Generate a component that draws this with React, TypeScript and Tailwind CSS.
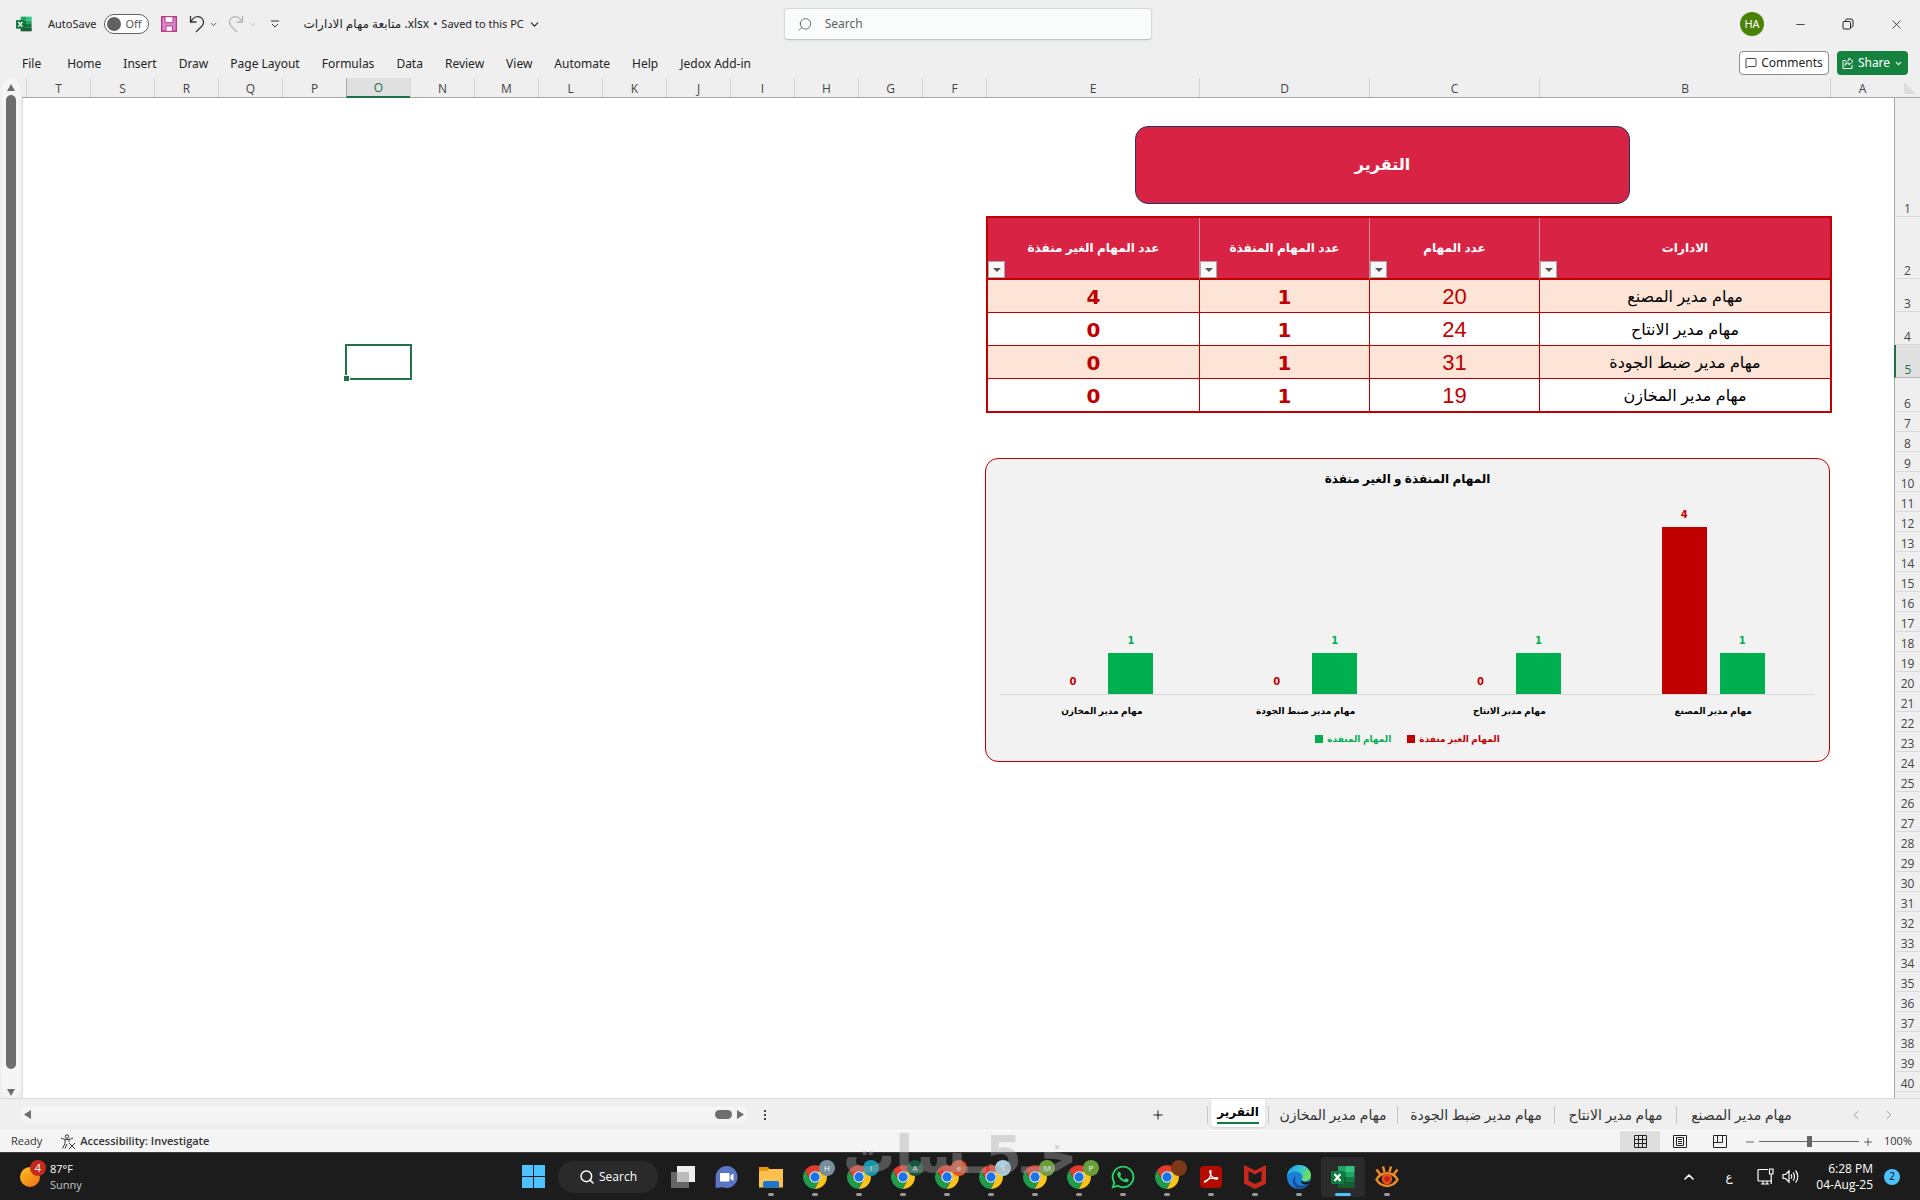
import { ReactNode, useState } from 'react';
import { ChevronDown, ChevronLeft, ChevronRight, ChevronUp, MessageSquare, Minus, Plus, Search, X } from 'lucide-react';
import { FaWhatsapp } from 'react-icons/fa';

const MENU = ['Home', 'Insert', 'Draw', 'Page Layout', 'Formulas', 'Data', 'Review', 'View', 'Automate', 'Help', 'Jedox Add-in'];

const COLUMNS = [
    { name: 'A', width: 'w-[64px]' },
    { name: 'B', width: 'w-[291px]' },
    { name: 'C', width: 'w-[170px]' },
    { name: 'D', width: 'w-[170px]' },
    { name: 'E', width: 'w-[213px]' },
    ...'FGHIJKLMNOPQRST'.split('').map((name) => ({ name, width: 'w-[64px]' })),
];

const ROW_HEIGHTS: Record<number, string> = {
    1: 'h-[119px]',
    2: 'h-[62px]',
    3: 'h-[33px]',
    4: 'h-[33px]',
    5: 'h-[33px]',
    6: 'h-[34px]',
};

const DEPARTMENTS = [
    { name: 'مهام مدير المصنع', total: 20, done: 1, open: 4 },
    { name: 'مهام مدير الانتاح', total: 24, done: 1, open: 0 },
    { name: 'مهام مدير ضبط الجودة', total: 31, done: 1, open: 0 },
    { name: 'مهام مدير المخازن', total: 19, done: 1, open: 0 },
];

const SHEET_TABS = [
    { name: 'مهام مدير المخازن', width: 'w-[129px]' },
    { name: 'مهام مدير ضبط الجودة', width: 'w-[157px]' },
    { name: 'مهام مدير الانتاح', width: 'w-[122px]' },
    { name: 'مهام مدير المصنع', width: 'w-[130px]' },
];

const ExcelIcon = ({ className }: { className: string }) => (
    <svg viewBox="0 0 24 24" className={className}>
        <path d="M7 1h8v6H7z" fill="#21a366" />
        <path d="M15 1h8.500v6H15z" fill="#33c481" />
        <path d="M7 7h8v5H7z" fill="#107c41" />
        <path d="M15 7h8.500v5H15z" fill="#21a366" />
        <path d="M7 12h8v5H7z" fill="#185c37" />
        <path d="M15 12h8.500v5H15z" fill="#107c41" />
        <path d="M7 17h16.500v6H7z" fill="#185c37" />
        <rect x="0" y="6" width="13" height="13" rx="1" fill="#107c41" />
        <path d="M3.500 9l6 7M9.500 9l-6 7" stroke="#fff" strokeWidth="2" />
    </svg>
);

const TitleBar = () => (
    <header className="flex h-12 items-center font-['Noto_Sans','DejaVu_Sans',sans-serif] text-[11px] text-[#242424]">
        <div className="flex flex-1 items-center pl-4">
            <ExcelIcon className="h-4 w-4" />
            <span className="ml-4">AutoSave</span>
            <button className="ml-2 flex h-5 w-[45px] items-center gap-1 rounded-full border border-[#616161] bg-white pl-0.5">
                <span className="h-3.5 w-3.5 rounded-full bg-[#616161]" />
                <span className="text-[#555]">Off</span>
            </button>
            <button aria-label="Save" className="ml-3">
                <svg viewBox="0 0 16 16" className="h-4 w-4">
                    <path d="M.7.700h14.600v14.600H.7z" fill="#d989d3" stroke="#b83a80" strokeWidth="1.400" />
                    <path d="M4 .7h8v6H4zM5 10h6.500v5.300H5z" fill="#fff" stroke="#b83a80" />
                </svg>
            </button>
            <button aria-label="Undo" className="ml-3 flex items-center gap-1">
                <svg viewBox="0 0 16 18" className="h-[18px] w-4" fill="none" stroke="#333" strokeWidth="1.300">
                    <path d="M1.500 1v6h6M1.500 7C4 2.500 8 .5 11.500 2.300c3.500 2 4 6 1.500 8.700L7 17" />
                </svg>
                <ChevronDown size={9} />
            </button>
            <button aria-label="Redo" className="ml-2.5 flex items-center gap-1 text-[#b5b5b5]">
                <svg viewBox="0 0 16 18" className="h-[18px] w-4" fill="none" stroke="currentColor" strokeWidth="1.300">
                    <path d="M14.500 1v6h-6M14.500 7C12 2.500 8 .5 4.500 2.300c-3.500 2-4 6-1.500 8.700L9 17" />
                </svg>
                <ChevronDown size={9} />
            </button>
            <button aria-label="Customize toolbar" className="ml-3.5">
                <svg viewBox="0 0 8 8" className="h-2 w-2" fill="none" stroke="#333">
                    <path d="M0 1h8M1 4l3 3 3-3" />
                </svg>
            </button>
            <button className="ml-6 flex items-center gap-1 whitespace-nowrap">
                <span className="text-[12px]">متابعة مهام الادارات .xlsx</span>
                <span>•</span>
                <span>Saved to this PC</span>
                <ChevronDown size={13} />
            </button>
        </div>
        <label className="flex h-8 w-[368px] items-center gap-3 rounded border border-[#d5d8d6] border-b-[#bfc4c1] bg-[#fafcfb] pl-3 text-[12px] shadow-xs">
            <Search size={17} strokeWidth={1.3} className="-scale-x-100 text-[#555]" />
            <input type="search" placeholder="Search" className="w-full bg-transparent outline-none placeholder:text-[#616161]" />
        </label>
        <div className="flex flex-1 items-center justify-end">
            <span className="mr-3 flex h-6 w-6 items-center justify-center rounded-full bg-[#498205] text-white">HA</span>
            <button aria-label="Minimize" className="flex w-12 justify-center"><Minus size={13} strokeWidth={1.5} /></button>
            <button aria-label="Restore" className="flex w-12 justify-center">
                <svg viewBox="0 0 12 12" className="h-3 w-3" fill="none" stroke="#222">
                    <rect x="1" y="3.500" width="7.500" height="7.500" rx="1" />
                    <path d="M3.500 3.500V2.500a1.500 1.500 0 0 1 1.500-1.500h4A2 2 0 0 1 11 3v4.500a1.500 1.500 0 0 1-1.500 1.500H8.500" />
                </svg>
            </button>
            <button aria-label="Close" className="flex w-12 justify-center"><X size={15} strokeWidth={1.3} /></button>
        </div>
    </header>
);

const MenuBar = () => (
    <nav className="flex h-[30px] items-center justify-between pl-[22px] pr-3 font-['Noto_Sans','DejaVu_Sans',sans-serif] text-[12px] text-[#242424]">
        <div className="flex gap-[22px] whitespace-nowrap pt-0.5">
            <button className="pr-1">File</button>
            {MENU.map((item) => <button key={item}>{item}</button>)}
        </div>
        <div className="flex gap-2">
            <button className="flex h-6 w-[90px] items-center justify-center gap-1 rounded border border-[#8a8a8a] bg-white">
                <MessageSquare size={12} strokeWidth={1.7} />
                Comments
            </button>
            <button className="flex h-6 w-[71px] items-center justify-center gap-1 rounded bg-[#15833f] text-white">
                <svg viewBox="0 0 12 12" className="h-3 w-3" fill="none" stroke="currentColor">
                    <path d="M4 3.500H1v8h9V8M7 1l4 3.500L7 8V6C5 6 4 7 3 8.500 3.500 5.500 5 3.500 7 3.200z" />
                </svg>
                Share
                <ChevronDown size={9} strokeWidth={3} />
            </button>
        </div>
    </nav>
);

const VerticalScroll = () => (
    <div className="flex w-[22px] flex-col px-0.5">
        <div className="flex flex-1 flex-col items-center rounded-full bg-[#f5f5f5] pb-0.5 pt-1.5">
            <svg viewBox="0 0 8 7" className="h-[7px] w-2" fill="#6e6e6e"><path d="M4 0l4 7H0z" /></svg>
            <div className="my-1 w-2.5 flex-1 rounded-full bg-[#6e6e6e]" />
            <svg viewBox="0 0 8 7" className="mt-4 h-[7px] w-2" fill="#6e6e6e"><path d="M0 0h8L4 7z" /></svg>
        </div>
    </div>
);

const ColumnHeaders = () => (
    <div className="flex h-5 border-b border-[#a6a6a6] text-[12px] text-[#444]">
        <div className="flex w-[26px] shrink-0 items-center pr-1">
            <svg viewBox="0 0 12 12" className="h-3 w-3" fill="#dcdcdc"><path d="M0 0v12h12z" /></svg>
        </div>
        {COLUMNS.map(({ name, width }) => (
            <div
                key={name}
                className={`${width} flex shrink-0 items-center justify-center border-l pt-0.5 leading-none ${
                    name === 'O'
                        ? '-mb-px border-b-2 border-l-[#a6a6a6] border-b-[#1e7145] bg-[#e0e0e0] text-[#1e7145]'
                        : 'border-[#d4d4d4]'
                }`}
            >
                {name}
            </div>
        ))}
    </div>
);

const RowHeaders = () => (
    <div className="flex w-[26px] shrink-0 flex-col text-[12px] text-[#444]">
        {Array.from({ length: 40 }, (_, i) => i + 1).map((row) => (
            <div
                key={row}
                className={`${ROW_HEIGHTS[row] ?? 'h-5'} flex items-end justify-center border-b leading-[14px] ${
                    row === 5
                        ? 'border-b-[#b5b5b5] border-l-2 border-l-[#1e7145] bg-[#e0e0e0] text-[#1e7145]'
                        : 'border-b-[#d9d9d9] border-l border-l-[#a6a6a6]'
                }`}
            >
                {row}
            </div>
        ))}
        <div className="flex-1 border-l border-[#a6a6a6]" />
    </div>
);

const HeaderCell = ({ width, label }: { width: string; label: string }) => (
    <th scope="col" className={`${width} relative border-b-2 border-l border-b-[#c00000] border-l-[#c9909a] bg-[#d92344] p-0 font-bold last:border-l-0`}>
        {label}
        <button aria-label={`تصفية ${label}`} className="absolute bottom-0 left-0 flex h-[17px] w-[17px] items-center justify-center border border-[#a9a9a9] bg-[#f7f7f7]">
            <svg viewBox="0 0 8 4" className="h-1 w-2" fill="#555"><path d="M0 0h8L4 4z" /></svg>
        </button>
    </th>
);

const ReportTable = () => (
    <table className="mt-3 w-[846px] table-fixed border-separate border-spacing-0 border-2 border-[#c00000] text-center font-['Liberation_Sans','DejaVu_Sans',sans-serif]">
        <thead>
            <tr className="h-[62px] text-[12px] text-white">
                <HeaderCell width="w-[291px]" label="الادارات" />
                <HeaderCell width="w-[170px]" label="عدد المهام" />
                <HeaderCell width="w-[170px]" label="عدد المهام المنفذة" />
                <HeaderCell width="w-[211px]" label="عدد المهام الغير منفذة" />
            </tr>
        </thead>
        <tbody className="[&_td]:border-b [&_td]:border-l [&_td]:border-[#c00000] [&_td]:p-0 [&_td]:pt-0.5 [&_td:last-child]:border-l-0 [&_tr:last-child_td]:border-b-0">
            {DEPARTMENTS.map((dept) => (
                <tr key={dept.name} className="h-[33px] text-[22px] leading-6 text-[#c00000] odd:bg-[#fce4d6] last:h-8">
                    <td className="text-[16px] text-black">{dept.name}</td>
                    <td>{dept.total}</td>
                    <td className="font-['DejaVu_Sans',sans-serif] text-[20px] font-bold">{dept.done}</td>
                    <td className="font-['DejaVu_Sans',sans-serif] text-[20px] font-bold">{dept.open}</td>
                </tr>
            ))}
        </tbody>
    </table>
);

const MAX_VALUE = 4;
const MAX_HEIGHT = 167;

const Bar = ({ value, color, text }: { value: number; color: string; text: string }) => (
    <div className="flex w-[45px] flex-col items-center justify-end">
        <span className={`mb-1 leading-4 ${text}`}>{value}</span>
        <div className={`w-full ${color}`} style={{ height: Math.floor((value / MAX_VALUE) * MAX_HEIGHT) }} />
    </div>
);

const TaskChart = () => (
    <section className="mr-0.5 mt-[45px] flex h-[304px] w-[845px] flex-col rounded-[13px] border border-[#c00000] bg-[#f2f2f2] px-3.5 font-['Liberation_Sans','DejaVu_Sans',sans-serif] font-bold">
        <h2 className="mt-2 text-center text-[12px] leading-6 text-black">المهام المنفذة و الغير منفذة</h2>
        <div className="flex h-[204px] border-b border-[#d9d9d9] font-['DejaVu_Sans',sans-serif] text-[10px]">
            {DEPARTMENTS.map((dept) => (
                <div key={dept.name} className="flex flex-1 justify-center gap-[13px]">
                    <Bar value={dept.done} color="bg-[#00b050]" text="text-[#00b050]" />
                    <Bar value={dept.open} color="bg-[#c00000]" text="text-[#c00000]" />
                </div>
            ))}
        </div>
        <div className="mt-2 flex text-[9px] leading-4 text-black">
            {DEPARTMENTS.map((dept) => <span key={dept.name} className="flex-1 text-center">{dept.name}</span>)}
        </div>
        <div className="mt-3 flex justify-center gap-4 text-[9px] leading-4">
            <span className="flex items-center gap-1 text-[#c00000]">
                المهام الغير منفذة
                <i className="h-2 w-2 bg-[#c00000]" />
            </span>
            <span className="flex items-center gap-1 text-[#00b050]">
                المهام المنفذة
                <i className="h-2 w-2 bg-[#00b050]" />
            </span>
        </div>
    </section>
);

const Sheet = () => (
    <main dir="rtl" className="flex min-w-0 flex-1 flex-col overflow-hidden">
        <ColumnHeaders />
        <div className="flex flex-1">
            <RowHeaders />
            <div className="relative min-w-0 flex-1 border-l border-[#dcdcdc] bg-white pr-[62px]">
                <h1 className="mr-[202px] mt-7 flex h-[78px] w-[495px] items-center justify-center rounded-[13px] border border-[#203864] bg-[#d92344] font-['Liberation_Sans','DejaVu_Sans',sans-serif] text-[16px] font-bold text-white">
                    التقرير
                </h1>
                <ReportTable />
                <TaskChart />
                {/* active cell O5 */}
                <div className="absolute right-[1482px] top-[246px] h-9 w-[67px] border-2 border-[#217346]">
                    <div className="absolute -bottom-1 -left-1 h-[7px] w-[7px] border border-white bg-[#217346]" />
                </div>
            </div>
        </div>
    </main>
);

const SheetTabs = () => (
    <div className="flex h-8 items-center border-t border-[#d9d9d9] pl-5">
        <div className="flex h-[17px] w-[728px] items-center rounded-full bg-[#f5f5f5] px-1">
            <svg viewBox="0 0 7 9" className="h-[9px] w-[7px]" fill="#6e6e6e"><path d="M7 0v9L0 4.500z" /></svg>
            <div className="ml-auto mr-[5px] h-[9px] w-[17px] rounded-full bg-[#6e6e6e]" />
            <svg viewBox="0 0 7 9" className="h-[9px] w-[7px]" fill="#6e6e6e"><path d="M0 0v9l7-4.500z" /></svg>
        </div>
        <svg viewBox="0 0 2 10" className="ml-4 h-2.5 w-0.5" fill="#444"><path d="M0 0h2v2H0zM0 4h2v2H0zM0 8h2v2H0z" /></svg>
        <div className="flex flex-1 items-center justify-end">
            <button aria-label="New sheet" className="mr-[42px]"><Plus size={14} strokeWidth={1.5} /></button>
            <div className="h-[18px] w-px bg-[#c8c8c8]" />
            <button className="mx-[3px] -mt-1 flex h-7 w-[54px] items-center justify-center rounded-b bg-white text-[12px] font-bold shadow-sm">
                <span className="border-b-2 border-[#107c41] leading-5">التقرير</span>
            </button>
        </div>
        {SHEET_TABS.map(({ name, width }) => (
            <button key={name} className={`${width} h-[18px] whitespace-nowrap border-l border-[#c8c8c8] text-[14px] leading-[18px] text-[#333]`}>
                {name}
            </button>
        ))}
        <div className="ml-[43px] mr-6 flex gap-[19px] text-[#999]">
            <ChevronLeft size={14} strokeWidth={1.7} />
            <ChevronRight size={14} strokeWidth={1.7} />
        </div>
    </div>
);

const StatusBar = () => {
    const [zoom, setZoom] = useState(100);

    return (
        <footer className="flex h-[22px] items-center border-t border-white bg-[#f4f4f4] pl-[11px] text-[11px] text-[#333]">
            <span>Ready</span>
            <button className="ml-[18px] flex items-center gap-1 font-semibold">
                <svg viewBox="0 0 16 16" className="h-4 w-4" fill="none" stroke="#333">
                    <circle cx="7" cy="2.500" r="1.700" />
                    <path d="M1 4c2 1 4 1.500 6 1.500S11 5 13 4M5 5.500v4L2.500 14.500M9 5.500V8M7 10l-2 4.500M9 9l6 6M15 9l-6 6" />
                </svg>
                Accessibility: Investigate
            </button>
            <div className="ml-auto flex h-full items-center">
                <button aria-label="Normal" className="flex h-full w-10 items-center justify-center bg-[#dedede]">
                    <svg viewBox="0 0 13 13" className="h-[13px] w-[13px]" fill="none" stroke="#222"><path d="M.5.500h12v12H.5zM4.500 0v13M8.500 0v13M0 4.500h13M0 8.500h13" /></svg>
                </button>
                <button aria-label="Page layout" className="flex w-10 justify-center">
                    <svg viewBox="0 0 14 13" className="h-[13px] w-3.5" fill="none" stroke="#222"><path d="M.5.500h13v12H.5zM3.500 2.500h7v8h-7zM5 4.500h4M5 6.500h4M5 8.500h4" /></svg>
                </button>
                <button aria-label="Page break preview" className="flex w-10 justify-center">
                    <svg viewBox="0 0 14 13" className="h-[13px] w-3.5" fill="none" stroke="#222"><path d="M.5.500h13v12H.5zM4.500 0v7.500M9.500 0v7.500H0" /></svg>
                </button>
                <button aria-label="Zoom out" className="ml-1"><Minus size={12} strokeWidth={1.5} /></button>
                <input
                    type="range"
                    aria-label="Zoom"
                    min={10}
                    max={190}
                    value={zoom}
                    onChange={(e) => setZoom(Number(e.target.value))}
                    className="mx-[3px] h-px w-[100px] appearance-none bg-[#666] [&::-webkit-slider-thumb]:h-[11px] [&::-webkit-slider-thumb]:w-[5px] [&::-webkit-slider-thumb]:appearance-none [&::-webkit-slider-thumb]:bg-[#666]"
                />
                <button aria-label="Zoom in"><Plus size={12} strokeWidth={1.5} /></button>
                <span className="w-[46px] pr-2 text-right">{zoom}%</span>
            </div>
        </footer>
    );
};

const TaskItem = ({ label, running = true, active = false, badge, badgeColor, children }: { label: string; running?: boolean; active?: boolean; badge?: string; badgeColor?: string; children: ReactNode }) => (
    <button aria-label={label} className={`relative flex h-10 w-11 items-center justify-center rounded ${active ? 'bg-[#2b2b2b]' : ''}`}>
        {children}
        {badgeColor && (
            <span className={`absolute right-0.5 top-[3px] flex h-4 w-4 items-center justify-center rounded-full text-[8px] text-white ${badgeColor}`}>
                {badge}
            </span>
        )}
        {running && (
            <span className={`absolute bottom-px h-[3px] rounded-full ${active ? 'w-4 bg-[#4cc2ff]' : 'w-1.5 bg-[#9a9a9a]'}`} />
        )}
    </button>
);

const ChromeIcon = () => (
    <svg viewBox="0 0 24 24" className="h-6 w-6">
        <path d="M2 5.500A12 12 0 0 1 22.600 6.500H12A5.500 5.500 0 0 0 7.240 14.750Z" fill="#e33b2e" />
        <path d="M2 5.500L7.240 14.750A5.500 5.500 0 0 0 16.760 14.750L11.800 24A12 12 0 0 1 2 5.500Z" fill="#1e9a48" />
        <path d="M22.600 6.500A12 12 0 0 1 11.800 24L16.760 14.750A5.500 5.500 0 0 0 12 6.500Z" fill="#fcc41a" />
        <circle cx="12" cy="12" r="5.700" fill="#fff" />
        <circle cx="12" cy="12" r="4.700" fill="#1a73e8" />
    </svg>
);

const CHROME_PROFILES = [
    { badge: 'H', color: 'bg-[#78909c]' },
    { badge: 'I', color: 'bg-[#0f97ad]' },
    { badge: 'A', color: 'bg-[#14573f]' },
    { badge: 'e', color: 'bg-[#d9532c]' },
    { badge: 'S', color: 'bg-[#a9cfe0]' },
    { badge: 'M', color: 'bg-[#689f38]' },
    { badge: 'P', color: 'bg-[#689f38]' },
];

const Taskbar = () => (
    <div className="relative flex h-12 items-center border-t border-[#3a3a3a] bg-[#1c1c1c] text-[12px] text-white">
        <button className="flex flex-1 items-center gap-2.5 pl-5 text-left leading-4">
            <span className="relative h-5 w-5 rounded-full bg-linear-to-br from-[#fcc21b] to-[#ee6c1c]">
                <span className="absolute -right-1.5 -top-[7px] flex h-4 w-4 items-center justify-center rounded-full bg-[#c42b1c] text-[11px]">4</span>
            </span>
            <span className="text-[11px]">
                87°F
                <span className="block text-[#c5c5c5]">Sunny</span>
            </span>
        </button>
        <div className="flex items-center">
            <TaskItem label="Start" running={false}>
                <svg viewBox="0 0 23 23" className="h-[23px] w-[23px]" fill="#4cc2ff"><path d="M0 0h11v11H0zM12 0h11v11H12zM0 12h11v11H0zM12 12h11v11H12z" /></svg>
            </TaskItem>
            <button className="mx-[3px] flex h-8 w-[100px] items-center justify-center gap-1 rounded-full bg-[#2a2a2a]">
                <Search size={16} strokeWidth={2.2} />
                Search
            </button>
            <TaskItem label="Task view" running={false}>
                <svg viewBox="0 0 24 22" className="h-[22px] w-6">
                    <path d="M0 6h18v16H0z" fill="#666" />
                    <path d="M6 0h18v16H6z" fill="#eee" />
                    <path d="M6 6h12v10H6z" fill="#bbb" />
                </svg>
            </TaskItem>
            <TaskItem label="Chat" running={false}>
                <svg viewBox="0 0 24 24" className="h-6 w-6">
                    <path d="M12 1a11 11 0 1 1-4.500 21.200L.6 23V12A11.200 11.200 0 0 1 12 1z" fill="#5b74c4" />
                    <rect x="5" y="8" width="9.500" height="8.500" rx="1" fill="#fff" />
                    <path d="M15.500 10.500l3-2v7.500l-3-2z" fill="#fff" />
                </svg>
            </TaskItem>
            <TaskItem label="File Explorer">
                <svg viewBox="0 0 24 22" className="h-[22px] w-6">
                    <path d="M0 1h9l2 3h13v17H0z" fill="#e8960c" />
                    <path d="M0 5h8l2-2h14v18.500H0z" fill="#fdc04f" />
                    <path d="M4 21.500V17a2 2 0 0 1 2-2h12a2 2 0 0 1 2 2v4.500z" fill="#1478d4" />
                </svg>
            </TaskItem>
            {CHROME_PROFILES.map(({ badge, color }) => (
                <TaskItem key={badge} label={`Chrome ${badge}`} badge={badge} badgeColor={color}>
                    <ChromeIcon />
                </TaskItem>
            ))}
            <TaskItem label="WhatsApp"><FaWhatsapp size={26} color="#25d366" /></TaskItem>
            <TaskItem label="Chrome" badgeColor="bg-[#7a3818]"><ChromeIcon /></TaskItem>
            <TaskItem label="Acrobat">
                <svg viewBox="0 0 22 22" className="h-[22px] w-[22px]">
                    <rect width="22" height="22" rx="4" fill="#b30b00" />
                    <path d="M5 16c2.500-.5 6.500-6 6-10.500 0-1-1.200-1-1.200 0 0 3.500 3.500 8 7.200 7.500 1 0 1-1.300 0-1.300-4 0-9 1.300-12 3.500-1 .8-.5 1.200 0 .8z" fill="none" stroke="#fff" strokeWidth="1.300" strokeLinejoin="round" />
                </svg>
            </TaskItem>
            <TaskItem label="McAfee">
                <svg viewBox="0 0 22 24" className="h-6 w-[22px]" fill="#c8281e"><path d="M0 0l11 5.500L22 0v18.500L11 24 0 18.500zM4.500 6v9.700l6.500 3.300 6.500-3.300V6L11 9.500z" /></svg>
            </TaskItem>
            <TaskItem label="Edge">
                <svg viewBox="0 0 24 24" className="h-6 w-6">
                    <defs>
                        <linearGradient id="edge" x1="0" y1="0" x2="1" y2=".4">
                            <stop offset="0" stopColor="#1b9de2" />
                            <stop offset=".6" stopColor="#36c6d8" />
                            <stop offset="1" stopColor="#6be05a" />
                        </linearGradient>
                    </defs>
                    <circle cx="12" cy="12" r="12" fill="#1b7fd6" />
                    <path d="M9 11c-3 5 1 11 8 9.500 2-.4 4-1.500 5-3A12 12 0 0 1 10 23.500C5 20 4 13 9 11z" fill="#1a4c9c" />
                    <path d="M0 11C1 4 6 0 12 0c7 0 12 5 12 10 0 4-3 6-6 6-2.500 0-4-.8-3.500-1.500 1.500-2 1-4.500-.5-6C10 5 3 6 0 11z" fill="url(#edge)" />
                    <path d="M14 15c2.500 3 6 2.500 9.500.5-.5 1.500-1 2.500-2 3.500-4 1.500-8 0-7.500-4z" fill="#1c1c1c" />
                </svg>
            </TaskItem>
            <TaskItem label="Excel" active><ExcelIcon className="h-6 w-6" /></TaskItem>
            <TaskItem label="Image viewer">
                <svg viewBox="0 0 24 24" className="h-6 w-6" fill="none" stroke="#f08a24" strokeWidth="2.500">
                    <path d="M1.500 14.500C6 6 18 6 22.500 14.500 18 23 6 23 1.500 14.500zM5 9L1.500 4.500M9.500 7L8 1.500M14.500 7L16 1.500M19 9l3.500-4.500" />
                    <circle cx="12" cy="14" r="4" fill="#c41f10" stroke="#e0521c" />
                </svg>
            </TaskItem>
        </div>
        <div className="flex flex-1 items-center justify-end pr-5">
            <ChevronUp size={16} strokeWidth={2.4} />
            <span className="ml-6 w-4 text-center">ع</span>
            <svg viewBox="0 0 17 17" className="ml-5 h-[17px] w-[17px]" fill="none" stroke="#fff" strokeWidth="1.200">
                <path d="M11 1.500H2a1 1 0 0 0-1 1V12a1 1 0 0 0 1 1h13M4 16h8M6 13v3M10 13v3M12.500 1h3.500v5h-3.500zM14.200 6v10" />
            </svg>
            <svg viewBox="0 0 17 15" className="ml-2 h-[15px] w-[17px]" fill="none" stroke="#fff" strokeWidth="1.200">
                <path d="M1 5.500h2.500L7 2v11L3.500 9.500H1zM9 5.500c1 1 1 3 0 4M11 3.500c2 2 2 6 0 8M13.500 1.500c3 3 3 9 0 12" />
            </svg>
            <span className="ml-3.5 w-[60px] whitespace-nowrap text-right leading-4">6:28 PM<br />04-Aug-25</span>
            <span className="ml-[11px] flex h-4 w-4 items-center justify-center rounded-full bg-[#4cc2ff] text-[10px] text-black">2</span>
        </div>
        <div dir="rtl" className="pointer-events-none absolute -top-7 left-[845px] flex w-[230px] justify-center whitespace-nowrap font-['DejaVu_Sans',sans-serif] text-[52px] font-bold leading-[60px] text-[#a8a8a8]/40">
            خـ5ـسات
        </div>
    </div>
);

const App = () => (
    <div className="flex min-h-screen flex-col overflow-hidden bg-[#efefef] font-['Open_Sans','DejaVu_Sans',sans-serif]">
        <TitleBar />
        <MenuBar />
        <div className="flex flex-1">
            <VerticalScroll />
            <Sheet />
        </div>
        <SheetTabs />
        <StatusBar />
        <Taskbar />
    </div>
);

export default App;
